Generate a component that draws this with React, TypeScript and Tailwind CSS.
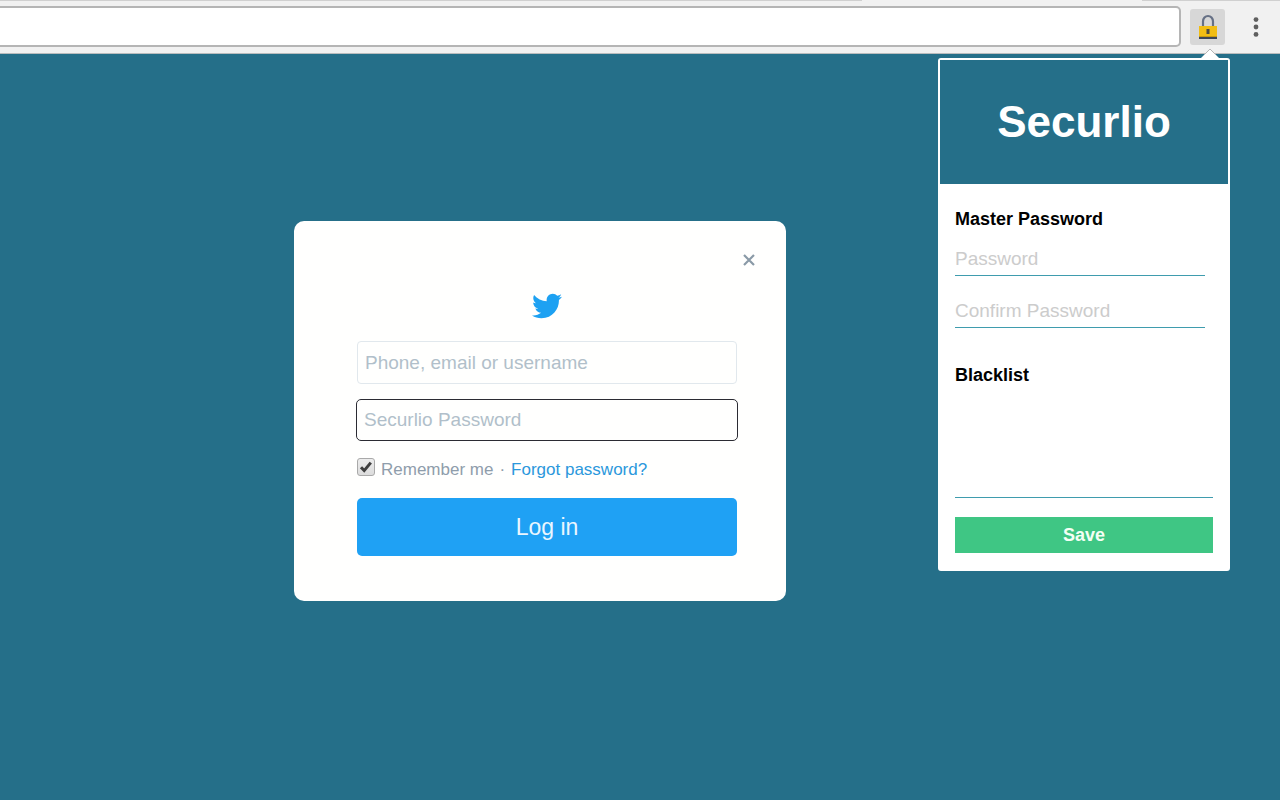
import React, { useState } from 'react';
import { FaTwitter } from 'react-icons/fa';

function LockIcon() {
  return (
    <svg width="20" height="26" viewBox="0 0 20 26" aria-hidden="true">
      <path d="M5 13V7.5a5 5.5 0 0 1 10 0V13" fill="none" stroke="#667085" strokeWidth="2.2" />
      <rect x="1" y="12" width="18" height="11" fill="#f2bd13" />
      <rect x="1" y="23" width="18" height="2" fill="#3e4657" />
      <rect x="1" y="22" width="18" height="1" fill="#c79a12" />
      <path d="M8.5 15h3v5h-3z" fill="#4c4a44" />
    </svg>
  );
}

function MenuDots() {
  return (
    <svg width="6" height="20" viewBox="0 0 6 20" fill="#5f5f5f" aria-hidden="true">
      <circle cx="3" cy="2.6" r="2.4" />
      <circle cx="3" cy="10" r="2.4" />
      <circle cx="3" cy="17.4" r="2.4" />
    </svg>
  );
}

function SettingsPopup() {
  const [password, setPassword] = useState('');
  const [confirm, setConfirm] = useState('');
  const [blacklist, setBlacklist] = useState('');

  const lineInput =
    'block h-[33px] w-[250px] border-b border-[#3f9cae] bg-transparent text-[19px] text-black outline-none placeholder:text-[#cccccc]';

  return (
    <div className="absolute top-full -right-[5px] z-10 mt-[13px] w-[292px] rounded-[3px] border-2 border-white bg-white">
      <svg className="absolute -top-3 right-2" width="20" height="11" viewBox="0 0 20 11" aria-hidden="true">
        <path d="M0 11L10 1l10 10z" fill="#fff" />
        <path d="M4.5 6.5L10 1l5.5 5.5" fill="none" stroke="#b5b5b5" strokeWidth="1" />
      </svg>
      <div className="flex h-[124px] items-center justify-center bg-[#256f89]">
        <h1 className="text-[44px] font-bold text-white">Securlio</h1>
      </div>
      <form className="px-[15px] pt-[23px] pb-4 text-lg leading-6" onSubmit={(e) => e.preventDefault()}>
        <label htmlFor="master" className="block font-bold text-black">Master Password</label>
        <input
          id="master"
          type="password"
          placeholder="Password"
          value={password}
          onChange={(e) => setPassword(e.target.value)}
          className={`${lineInput} mt-3`}
        />
        <input
          type="password"
          aria-label="Confirm Password"
          placeholder="Confirm Password"
          value={confirm}
          onChange={(e) => setConfirm(e.target.value)}
          className={`${lineInput} mt-[19px]`}
        />
        <label htmlFor="blacklist" className="mt-[35px] block font-bold text-black">Blacklist</label>
        <textarea
          id="blacklist"
          value={blacklist}
          onChange={(e) => setBlacklist(e.target.value)}
          className="block h-[111px] w-full resize-none border-b border-[#3f9cae] outline-none"
        />
        <button type="submit" className="mt-[19px] block h-9 w-full bg-[#3fc684] font-bold text-[#f4fff4]">Save</button>
      </form>
    </div>
  );
}

function LoginCard() {
  const [remember, setRemember] = useState(true);

  return (
    <div className="w-[492px] rounded-[10px] bg-[#fffffe] pt-[31px] pb-[45px]">
      <div className="flex justify-end pr-[29px]">
        <button type="button" aria-label="Close" className="flex size-4 items-center justify-center">
          <svg width="12" height="12" viewBox="0 0 12 12" aria-hidden="true">
            <path d="M1 1l10 10M11 1L1 11" stroke="#8a9aa7" strokeWidth="2.2" />
          </svg>
        </button>
      </div>
      <form className="mr-[49px] ml-[63px]" onSubmit={(e) => e.preventDefault()}>
        <FaTwitter size={30} className="mx-auto mt-[23px] text-[#1da1f2]" />
        <input
          type="text"
          aria-label="Phone, email or username"
          placeholder="Phone, email or username"
          className="mt-5 block h-[43px] w-full rounded border border-[#e1e8ed] px-[7px] text-[19px] outline-none placeholder:text-[#b1bfca]"
        />
        <div className="-mx-px mt-[15px]">
          <input
            type="password"
            aria-label="Securlio Password"
            placeholder="Securlio Password"
            className="block h-[42px] w-full rounded-[5px] border border-[#2b2b33] px-[7px] text-[19px] outline-none placeholder:text-[#b1bfca]"
          />
        </div>
        <div className="mt-[17px] flex items-center text-[17px] leading-6 text-[#8f9dab]">
          <label className="flex items-center">
            <span className="relative mr-[6px] mb-[6px]">
              <input
                type="checkbox"
                checked={remember}
                onChange={(e) => setRemember(e.target.checked)}
                className="block size-[18px] appearance-none rounded-[3px] border border-[#a9a9a9] bg-linear-to-b from-[#ededed] to-[#dcdcdc]"
              />
              {remember && (
                <svg className="pointer-events-none absolute inset-0" width="18" height="18" viewBox="0 0 18 18" aria-hidden="true">
                  <path d="M4 9.2l3.2 3.4L13.8 4.6" fill="none" stroke="#404040" strokeWidth="3" />
                </svg>
              )}
            </span>
            Remember me
          </label>
          <span className="mx-[6px]">·</span>
          <a href="#" className="text-[#2b98dc]">Forgot password?</a>
        </div>
        <button type="submit" className="mt-4 block h-[58px] w-full rounded-[5px] bg-[#1fa1f4] text-[23px] text-[#eaf6ff]">
          Log in
        </button>
      </form>
    </div>
  );
}

function App() {
  return (
    <div className="flex min-h-screen flex-col bg-[#256f89] font-['Liberation_Sans',Arial,sans-serif]">
      <header className="border-b border-[#b9bcbd] bg-[#f1f1f1]">
        <div className="flex h-px">
          <div className="flex-1 bg-[#d0d0d0]" />
          <div className="w-[280px]" />
          <div className="w-[138px] bg-[#d0d0d0]" />
        </div>
        <div className="flex items-center pt-[5px] pr-[21px] pb-[6px]">
          <input
            type="text"
            aria-label="Address"
            className="h-[41px] min-w-0 flex-1 rounded-r-[5px] border-2 border-l-0 border-[#b5b5b5] bg-white px-3 outline-none"
          />
          <div className="relative ml-[9px]">
            <button type="button" aria-label="Securlio" className="flex h-9 w-[35px] items-center justify-center rounded-[3px] bg-[#d7d7d7]">
              <LockIcon />
            </button>
            <SettingsPopup />
          </div>
          <button type="button" aria-label="Menu" className="ml-7 flex h-9 items-center">
            <MenuDots />
          </button>
        </div>
      </header>
      <main className="flex flex-1 items-center justify-center pr-[200px] pb-8">
        <LoginCard />
      </main>
    </div>
  );
}

export default App;
